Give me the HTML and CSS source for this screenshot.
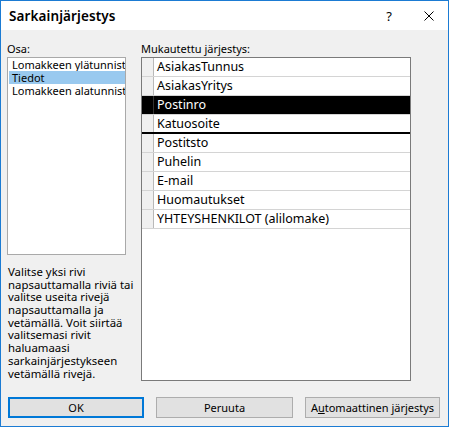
FILE: index.html
```html
<!DOCTYPE html>
<html lang="fi">
<head>
<meta charset="utf-8">
<title>Sarkainjärjestys</title>
<link rel="stylesheet" href="styles.css">
</head>
<body>
<div class="window">
  <div class="titlebar">
    <div class="title">Sarkainjärjestys</div>
    <div class="tb-btn help">?</div>
    <div class="tb-btn close">
      <svg width="10" height="10" viewBox="0 0 10 10"><path d="M0.5 0.5 L9.5 9.5 M9.5 0.5 L0.5 9.5" stroke="#000" stroke-width="1" fill="none"/></svg>
    </div>
  </div>
  <div class="main">
    <div class="left">
      <div class="label">Osa:</div>
      <div class="listbox">
        <div class="item">Lomakkeen ylätunnist</div>
        <div class="item selected">Tiedot</div>
        <div class="item">Lomakkeen alatunnist</div>
      </div>
      <div class="help-text">
        <div class="line">Valitse yksi rivi</div>
        <div class="line">napsauttamalla riviä tai</div>
        <div class="line">valitse useita rivejä</div>
        <div class="line">napsauttamalla ja</div>
        <div class="line">vetämällä. Voit siirtää</div>
        <div class="line">valitsemasi rivit</div>
        <div class="line">haluamaasi</div>
        <div class="line">sarkainjärjestykseen</div>
        <div class="line">vetämällä rivejä.</div>
      </div>
    </div>
    <div class="right">
      <div class="label">Mukautettu järjestys:</div>
      <div class="grid">
        <div class="row"><div class="sel"></div><div class="cell">AsiakasTunnus</div></div>
        <div class="row"><div class="sel"></div><div class="cell">AsiakasYritys</div></div>
        <div class="row active"><div class="sel"></div><div class="cell">Postinro</div></div>
        <div class="row insert"><div class="sel"></div><div class="cell">Katuosoite</div></div>
        <div class="row"><div class="sel"></div><div class="cell">Postitsto</div></div>
        <div class="row"><div class="sel"></div><div class="cell">Puhelin</div></div>
        <div class="row"><div class="sel"></div><div class="cell">E-mail</div></div>
        <div class="row"><div class="sel"></div><div class="cell">Huomautukset</div></div>
        <div class="row"><div class="sel"></div><div class="cell">YHTEYSHENKILOT (alilomake)</div></div>
      </div>
    </div>
  </div>
  <div class="buttons">
    <button class="btn ok">OK</button>
    <button class="btn cancel">Peruuta</button>
    <button class="btn auto">A<u>u</u>tomaattinen järjestys</button>
  </div>
</div>
</body>
</html>
```
FILE: styles.css
```css
html, body {
  margin: 0;
  padding: 0;
  background: #f0f0f0;
}

.window {
  width: 449px;
  height: 427px;
  box-sizing: border-box;
  border: 1px solid #1b7bd3;
  background: #f0f0f0;
  font-family: "Noto Sans", "Open Sans", sans-serif;
  color: #000;
  display: flex;
  flex-direction: column;
  overflow: hidden;
}

.titlebar {
  height: 29px;
  flex: none;
  background: #fff;
  display: flex;
  align-items: center;
  padding-left: 8px;
}

.title {
  flex: 1;
  font-size: 13.5px;
  font-weight: 600;
  letter-spacing: 0.1px;
}

.tb-btn {
  height: 29px;
  display: flex;
  align-items: center;
  justify-content: center;
}

.help {
  width: 42px;
  font-size: 13px;
}

.close {
  width: 38px;
}

.main {
  display: grid;
  grid-template-columns: 119px 270px;
  column-gap: 15px;
  padding: 11px 0 0 6px;
  height: 351px;
  box-sizing: border-box;
  flex: none;
}

.label {
  font-size: 11px;
  line-height: 16px;
  height: 16px;
}

.listbox {
  height: 198px;
  box-sizing: border-box;
  border: 1px solid #a9a9a9;
  background: #fff;
  overflow: hidden;
}

.item {
  font-size: 11px;
  line-height: 13px;
  height: 13px;
  padding-left: 3px;
  margin-left: 1px;
  white-space: nowrap;
  overflow: hidden;
}

.item.selected {
  background: #99c9ef;
}

.help-text {
  margin: 11px 0 0 1px;
  font-size: 11.4px;
  white-space: nowrap;
}

.line {
  height: 12.7px;
  line-height: 12.7px;
}

.grid {
  height: 324px;
  box-sizing: border-box;
  border: 1px solid #7a7a7a;
  background: #fff;
}

.row {
  display: flex;
  height: 19px;
  box-sizing: border-box;
  border-bottom: 1px solid #d4d4d4;
}

.sel {
  width: 11px;
  flex: none;
  background: #f0f0f0;
  border-right: 1px solid #b9b9b9;
}

.cell {
  flex: 1;
  font-size: 12.5px;
  line-height: 18px;
  padding-left: 3px;
  white-space: nowrap;
  overflow: hidden;
}

.row.active {
  background: #000;
}

.row.active .sel {
  background: #000;
  border-right-color: #333;
}

.row.active .cell {
  color: #fff;
}

.row.insert {
  border-bottom: 2px solid #000;
}

.buttons {
  display: flex;
  gap: 12px;
  padding-left: 7px;
  margin-top: 16px;
  flex: none;
}

.btn {
  height: 21px;
  box-sizing: border-box;
  background: #e1e1e1;
  border: 1px solid #adadad;
  font-family: "Noto Sans", "Open Sans", sans-serif;
  font-size: 11px;
  color: #000;
  padding: 0;
  margin: 0;
}

.btn.ok {
  width: 136px;
  border: 2px solid #0078d7;
}

.btn.cancel {
  width: 137px;
}

.btn.auto {
  width: 135px;
}
```
